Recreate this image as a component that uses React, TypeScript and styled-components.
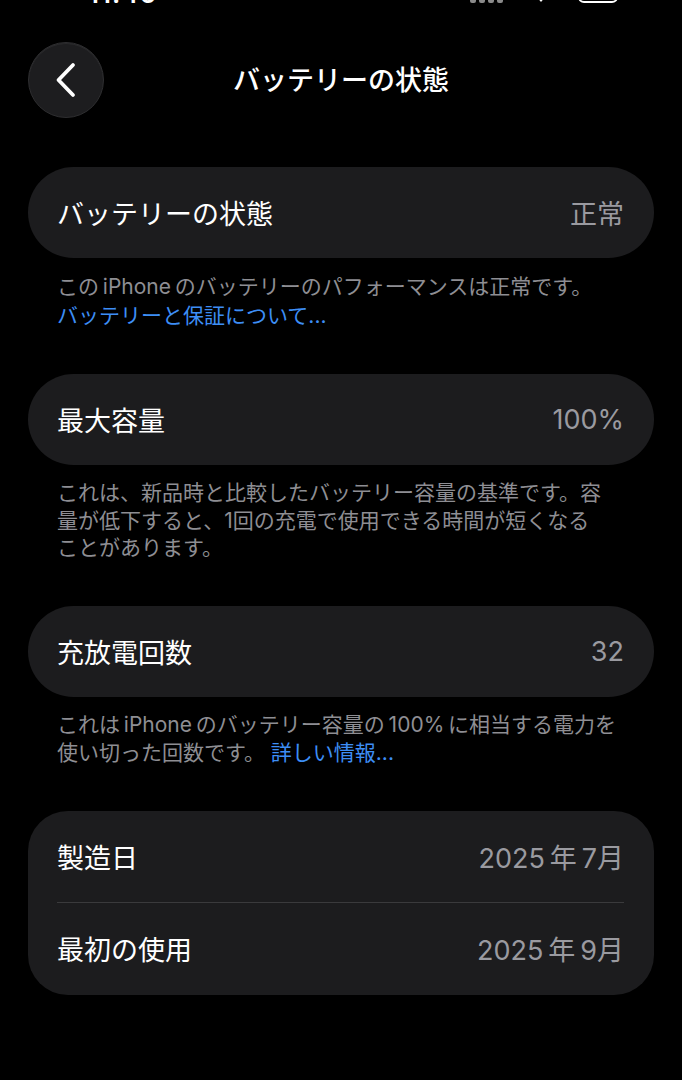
import React from "react"
import styled, {createGlobalStyle} from "styled-components";

const GlobalStyle = createGlobalStyle`
  html, body {
    margin: 0;
    padding: 0;
    background-color: #000;
  }
  body {
    font-family: Inter, "Noto Sans CJK JP", sans-serif;
    color: #fff;
    -webkit-font-smoothing: antialiased;
  }
`

const StyledPage = styled.div`
  min-height: 1080px;
  background-color: #000;
  padding: 0 28px 40px;
  box-sizing: border-box;
`

// only the bottom edge of the status bar peeks into view
const StyledStatusBar = styled.div`
  height: 4px;
  overflow: hidden;
  display: flex;
  align-items: flex-end;
  justify-content: space-between;
  margin: 0 -28px;
  padding: 0 64px 0 88px;
`

const StyledClock = styled.div`
  font-size: 26px;
  font-weight: 600;
  line-height: 26px;
  margin-bottom: -3px;
  letter-spacing: 1px;
`

const StyledStatusIcons = styled.div`
  display: flex;
  align-items: flex-end;
  gap: 24px;
  margin-bottom: 1px;
`

const StyledBattery = styled.div`
  width: 40px;
  height: 20px;
  border-radius: 6px;
  border: 2px solid #fff;
  box-sizing: border-box;
`

const StyledHeader = styled.div`
  display: grid;
  grid-template-columns: 76px 1fr 76px;
  align-items: center;
  margin-top: 38px;
`

const StyledBackButton = styled.button`
  width: 76px;
  height: 76px;
  border-radius: 50%;
  background-color: #1d1d1f;
  border: 1px solid #2e2e30;
  box-shadow: inset 0 1px 0 rgba(255, 255, 255, 0.06);
  display: flex;
  align-items: center;
  justify-content: center;
  padding: 0;
  cursor: pointer;
`

const StyledTitle = styled.h1`
  margin: 0;
  text-align: center;
  font-size: 27px;
  font-weight: 500;
  line-height: 1;
  color: #fff;
`

const StyledContent = styled.div`
  display: flex;
  flex-direction: column;
  gap: 44px;
  margin-top: 49px;
`

const StyledSection = styled.section`
  display: flex;
  flex-direction: column;
  gap: 14px;
`

const StyledCard = styled.div<{ round: number }>`
  background-color: #1c1c1e;
  border-radius: ${props => props.round}px;
  padding: 0 30px 0 29px;
`

const StyledRow = styled.div`
  height: 91px;
  display: flex;
  align-items: center;
  justify-content: space-between;
  font-size: 27px;
  & + & {
    border-top: 1px solid #3a3a3c;
    height: 92px;
  }
`

const StyledLabel = styled.span`
  color: #fff;
`

const StyledValue = styled.span`
  color: #9a9aa0;
`

const StyledFooter = styled.p<{ lineHeight: number }>`
  margin: 0;
  padding: 0 29px;
  font-size: 21px;
  line-height: ${props => props.lineHeight}px;
  color: #8e8e93;
`

const StyledLink = styled.span`
  color: #3d8ef5;
`

const BackChevron: React.FC = () => (
    <svg width="24" height="36" viewBox="0 0 24 36" fill="none">
        <path d="M19 3 L4.5 18 L19 33" stroke="#fff" strokeWidth="3.8" strokeLinecap="round" strokeLinejoin="round"/>
    </svg>
)

const SignalDots: React.FC = () => (
    <svg width="34" height="6" viewBox="0 0 34 6">
        {[0, 1, 2, 3].map(i => <rect key={i} x={i * 9} y={0} width="6" height="6" rx="2" fill="#8a8a8a"/>)}
    </svg>
)

const WifiTip: React.FC = () => (
    <svg width="26" height="20" viewBox="0 0 26 20">
        <path d="M13 19 L8 13 A8 8 0 0 1 18 13 Z" fill="#fff"/>
    </svg>
)

export default function App() {
    return (
        <>
            <GlobalStyle/>
            <StyledPage>
                <StyledStatusBar>
                    <StyledClock>11:46</StyledClock>
                    <StyledStatusIcons>
                        <SignalDots/>
                        <WifiTip/>
                        <StyledBattery/>
                    </StyledStatusIcons>
                </StyledStatusBar>

                <StyledHeader>
                    <StyledBackButton aria-label="戻る">
                        <BackChevron/>
                    </StyledBackButton>
                    <StyledTitle>バッテリーの状態</StyledTitle>
                    <div/>
                </StyledHeader>

                <StyledContent>
                    <StyledSection>
                        <StyledCard round={46}>
                            <StyledRow>
                                <StyledLabel>バッテリーの状態</StyledLabel>
                                <StyledValue>正常</StyledValue>
                            </StyledRow>
                        </StyledCard>
                        <StyledFooter lineHeight={29}>
                            この&thinsp;iPhone&thinsp;のバッテリーのパフォーマンスは正常です。<br/>
                            <StyledLink>バッテリーと保証について...</StyledLink>
                        </StyledFooter>
                    </StyledSection>

                    <StyledSection>
                        <StyledCard round={46}>
                            <StyledRow>
                                <StyledLabel>最大容量</StyledLabel>
                                <StyledValue>100%</StyledValue>
                            </StyledRow>
                        </StyledCard>
                        <StyledFooter lineHeight={27.5}>
                            これは、新品時と比較したバッテリー容量の基準です。容<br/>
                            量が低下すると、1回の充電で使用できる時間が短くなる<br/>
                            ことがあります。
                        </StyledFooter>
                    </StyledSection>

                    <StyledSection>
                        <StyledCard round={46}>
                            <StyledRow>
                                <StyledLabel>充放電回数</StyledLabel>
                                <StyledValue>32</StyledValue>
                            </StyledRow>
                        </StyledCard>
                        <StyledFooter lineHeight={28}>
                            これは&thinsp;iPhone&thinsp;のバッテリー容量の&thinsp;100%&thinsp;に相当する電力を<br/>
                            使い切った回数です。 <StyledLink>詳しい情報...</StyledLink>
                        </StyledFooter>
                    </StyledSection>

                    <StyledSection>
                        <StyledCard round={40}>
                            <StyledRow>
                                <StyledLabel>製造日</StyledLabel>
                                <StyledValue>2025&thinsp;年&thinsp;7月</StyledValue>
                            </StyledRow>
                            <StyledRow>
                                <StyledLabel>最初の使用</StyledLabel>
                                <StyledValue>2025&thinsp;年&thinsp;9月</StyledValue>
                            </StyledRow>
                        </StyledCard>
                    </StyledSection>
                </StyledContent>
            </StyledPage>
        </>
    )
}
